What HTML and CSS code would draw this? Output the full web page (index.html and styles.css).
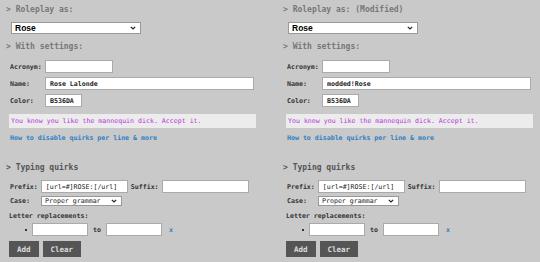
FILE: index.html
```html
<!DOCTYPE html>
<html lang="en">

<head>
    <meta charset="UTF-8">
    <meta name="viewport" content="width=device-width, initial-scale=1.0">
    <title>Quirks</title>
    <link rel="stylesheet" href="styles.css">
</head>

<body>
    <div class="row">
        <div class="panel">
            <h2 class="heading">&gt; Roleplay as:</h2>
            <div class="select-wrap char">
                <select class="char-select"><option>Rose</option></select>
                <svg class="chevron" viewBox="0 0 6 4" width="6" height="4"><path d="M0.8 0.8 L3 3 L5.2 0.8" fill="none" stroke="#222" stroke-width="1.2"/></svg>
            </div>
            <h2 class="heading">&gt; With settings:</h2>
            <div class="settings">
                <label>Acronym:</label><input class="acronym" type="text" value="">
                <label>Name:</label><input class="name" type="text" value="Rose Lalonde">
                <label>Color:</label><input class="color" type="text" value="B536DA">
            </div>
            <p class="quote">You know you like the mannequin dick. Accept it.</p>
            <a class="help" href="#">How to disable quirks per line &amp; more</a>
            <h2 class="heading dark">&gt; Typing quirks</h2>
            <div class="line">
                <label>Prefix:</label><input class="fix" type="text" value="[url=#]ROSE:[/url]">
                <label>Suffix:</label><input class="fix" type="text" value="">
            </div>
            <div class="line">
                <label class="case-label">Case:</label>
                <div class="select-wrap">
                    <select class="case"><option>Proper grammar</option></select>
                    <svg class="chevron" viewBox="0 0 6 4" width="6" height="4"><path d="M0.8 0.8 L3 3 L5.2 0.8" fill="none" stroke="#222" stroke-width="1.2"/></svg>
                </div>
            </div>
            <p class="sub">Letter replacements:</p>
            <ul class="replacements">
                <li><input type="text"><span class="to">to</span><input type="text"><a class="remove" href="#">x</a></li>
            </ul>
            <div class="buttons">
                <button>Add</button>
                <button>Clear</button>
            </div>
        </div>
        <div class="panel">
            <h2 class="heading">&gt; Roleplay as: (Modified)</h2>
            <div class="select-wrap char">
                <select class="char-select"><option>Rose</option></select>
                <svg class="chevron" viewBox="0 0 6 4" width="6" height="4"><path d="M0.8 0.8 L3 3 L5.2 0.8" fill="none" stroke="#222" stroke-width="1.2"/></svg>
            </div>
            <h2 class="heading">&gt; With settings:</h2>
            <div class="settings">
                <label>Acronym:</label><input class="acronym" type="text" value="">
                <label>Name:</label><input class="name" type="text" value="modded!Rose">
                <label>Color:</label><input class="color" type="text" value="B536DA">
            </div>
            <p class="quote">You know you like the mannequin dick. Accept it.</p>
            <a class="help" href="#">How to disable quirks per line &amp; more</a>
            <h2 class="heading dark">&gt; Typing quirks</h2>
            <div class="line">
                <label>Prefix:</label><input class="fix" type="text" value="[url=#]ROSE:[/url]">
                <label>Suffix:</label><input class="fix" type="text" value="">
            </div>
            <div class="line">
                <label class="case-label">Case:</label>
                <div class="select-wrap">
                    <select class="case"><option>Proper grammar</option></select>
                    <svg class="chevron" viewBox="0 0 6 4" width="6" height="4"><path d="M0.8 0.8 L3 3 L5.2 0.8" fill="none" stroke="#222" stroke-width="1.2"/></svg>
                </div>
            </div>
            <p class="sub">Letter replacements:</p>
            <ul class="replacements">
                <li><input type="text"><span class="to">to</span><input type="text"><a class="remove" href="#">x</a></li>
            </ul>
            <div class="buttons">
                <button>Add</button>
                <button>Clear</button>
            </div>
        </div>
    </div>
</body>

</html>
```

FILE: styles.css
```css
body {
    margin: 0;
    background-color: #c9c9c9;
    font-family: "DejaVu Sans Mono", monospace;
    font-size: 6.6px;
    color: #333;
}

.row {
    display: flex;
    gap: 14px;
}

.panel {
    width: 257px;
    padding: 5px 0 0 6px;
}

.heading {
    margin: 0;
    font-size: 8px;
    line-height: 10px;
    color: #777;
    font-weight: bold;
}

.heading.dark {
    color: #555;
    margin-top: 20px;
}

input,
select,
button {
    font-family: "DejaVu Sans Mono", monospace;
    font-size: 6.6px;
    box-sizing: border-box;
    margin: 0;
}

input {
    height: 13px;
    border: 1px solid #aaa;
    background-color: #fff;
    padding: 0 4px;
    color: #222;
}

select {
    appearance: none;
    -webkit-appearance: none;
    display: block;
    border: 1px solid #999;
    border-radius: 0;
    background-color: #fff;
    outline: none;
}

.select-wrap {
    position: relative;
    width: max-content;
}

.select-wrap.char {
    margin: 7px 0 8px 5px;
}

.chevron {
    position: absolute;
    right: 5px;
    top: 50%;
    margin-top: -2px;
}

.char-select {
    width: 130px;
    height: 12px;
    padding: 0 3px;
    font-family: "Liberation Sans", sans-serif;
    font-weight: bold;
    font-size: 8.5px;
    color: #000;
}

.settings {
    display: grid;
    grid-template-columns: 35px auto;
    row-gap: 4px;
    margin: 8px 0 0 4px;
    align-items: center;
    justify-items: start;
}

.settings label,
.line label,
.sub {
    font-weight: bold;
}

.settings input {
    font-weight: bold;
}

.acronym {
    width: 68px;
}

.name {
    width: 209px;
}

.color {
    width: 37px;
}

.quote {
    margin: 7px 0 0 3px;
    width: 247px;
    height: 14px;
    line-height: 14px;
    box-sizing: border-box;
    padding-left: 2px;
    background-color: #ececec;
    color: #b536da;
}

.help {
    display: block;
    margin: 6px 0 0 4px;
    line-height: 9px;
    color: #2d80c4;
    text-decoration: none;
    font-weight: bold;
}

.line {
    display: flex;
    align-items: center;
    gap: 3px;
    margin: 7px 0 0 4px;
}

.line + .line {
    margin-top: 3px;
}

.fix {
    width: 87px;
}

.case-label {
    width: 28px;
}

.case {
    width: 81px;
    height: 10px;
    padding: 0 3px;
    color: #222;
}

.sub {
    margin: 6px 0 0 3px;
    line-height: 9px;
}

.replacements {
    margin: 2px 0 0 0;
    padding-left: 26px;
    list-style: none;
}

.replacements li {
    display: flex;
    align-items: center;
    position: relative;
}

.replacements li::before {
    content: "";
    position: absolute;
    left: -7px;
    top: 6px;
    width: 2px;
    height: 2px;
    background-color: #333;
}

.replacements input {
    width: 56px;
}

.to {
    font-weight: bold;
    width: 18px;
    text-align: center;
}

.remove {
    margin-left: 7px;
    color: #2d80c4;
    text-decoration: none;
    font-weight: bold;
}

.buttons {
    display: flex;
    gap: 4px;
    margin: 5px 0 0 3px;
}

.buttons button {
    height: 16px;
    padding: 0 8px;
    border: 0;
    background-color: #555;
    color: #ddd;
    font-weight: bold;
    font-size: 7.5px;
}
```
